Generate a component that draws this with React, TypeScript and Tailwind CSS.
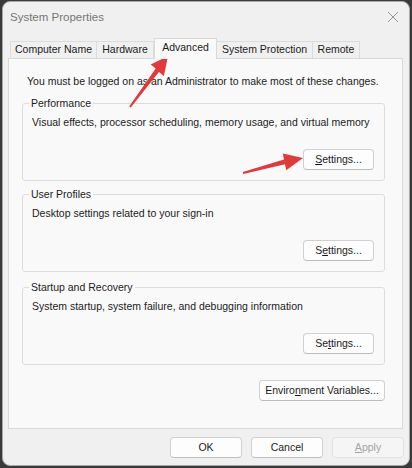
const font = "font-['Liberation_Sans',Arial,sans-serif]";

function Btn({ children, w, disabled }: { children: React.ReactNode; w: string; disabled?: boolean }) {
  return (
    <button
      className={`${w} h-[21px] rounded-[4px] border text-[10.5px] leading-none ${
        disabled
          ? "bg-[#f5f5f5] border-[#e3e3e3] text-[#a3a3a3]"
          : "bg-[#fdfdfd] border-[#d0d0d0] border-b-[#bdbdbd] text-[#1b1b1b]"
      }`}
    >
      {children}
    </button>
  );
}

function Group({ title, text, hot, top }: { title: string; text: string; hot: React.ReactNode; top: string }) {
  return (
    <fieldset className={`${top} ml-[13px] w-[363px] h-[86px] border border-[#dcdcdc] rounded-[3px]`}>
      <legend className="ml-[6px] px-[2px] leading-[16px]">{title}</legend>
      <p className="ml-[9px] mt-[3px] leading-[16px]">{text}</p>
      <div className="flex justify-end mr-[10px] mt-[19px]">
        <Btn w="w-[71px]">{hot}</Btn>
      </div>
    </fieldset>
  );
}

export default function App() {
  const tabs = [
    { name: "Computer Name", w: "w-[87px]" },
    { name: "Hardware", w: "w-[57px]" },
    { name: "Advanced", w: "w-[63px]", on: true },
    { name: "System Protection", w: "w-[96px]" },
    { name: "Remote", w: "w-[47px]" },
  ];
  return (
    <div className={`relative w-[412px] h-[468px] bg-[#3a3a3a] pt-[1px] pl-[2px] ${font} text-[10.5px] text-[#1b1b1b]`}>
      <div className="w-[408px] h-[465px] rounded-[8px] bg-[#f0f0f0] border border-[#a8a8a8] flex flex-col overflow-hidden">
        {/* title bar */}
        <div className="h-[36px] flex justify-between pl-[7px] pr-[8px] pt-[7px]">
          <span className="text-[11.5px] text-[#767676] leading-[16px]">System Properties</span>
          <svg width="12" height="12" viewBox="0 0 12 12" className="mt-[2px] mr-[2px]">
            <path d="M1 1L11 11M11 1L1 11" stroke="#959595" strokeWidth="1" />
          </svg>
        </div>

        {/* tabs */}
        <div className="h-[20px] flex items-end pl-[7px] relative z-10">
          {tabs.map((t) =>
            t.on ? (
              <div
                key={t.name}
                className={`${t.w} h-[21px] -mb-px bg-[#f9f9f9] border border-b-0 border-[#d9d9d9] flex items-center justify-center pb-[2px]`}
              >
                {t.name}
              </div>
            ) : (
              <div
                key={t.name}
                className={`${t.w} h-[17px] border border-b-0 border-l-0 first:border-l border-[#dcdcdc] flex items-center justify-center`}
              >
                {t.name}
              </div>
            )
          )}
        </div>

        {/* panel */}
        <div className="ml-[5px] mr-[6px] h-[371px] bg-[#f9f9f9] border border-[#d9d9d9] pt-[14px] flex flex-col">
          <p className="pl-[18px] leading-[16px]">
            You must be logged on as an Administrator to make most of these changes.
          </p>
          <Group
            top="mt-[6px]"
            title="Performance"
            text="Visual effects, processor scheduling, memory usage, and virtual memory"
            hot={<><u>S</u>ettings...</>}
          />
          <Group
            top="mt-[5px]"
            title="User Profiles"
            text="Desktop settings related to your sign-in"
            hot={<>S<u>e</u>ttings...</>}
          />
          <Group
            top="mt-[7px]"
            title="Startup and Recovery"
            text="System startup, system failure, and debugging information"
            hot={<>Se<u>t</u>tings...</>}
          />
          <div className="flex justify-end mr-[17px] mt-[15px]">
            <Btn w="w-[126px]">
              Enviro<u>n</u>ment Variables...
            </Btn>
          </div>
        </div>

        {/* bottom buttons */}
        <div className="flex justify-end gap-[9px] mr-[5px] mt-[8px]">
          <Btn w="w-[72px]">OK</Btn>
          <Btn w="w-[72px]">Cancel</Btn>
          <Btn w="w-[72px]" disabled>
            <u>A</u>pply
          </Btn>
        </div>
      </div>

      {/* annotation arrows */}
      <svg className="absolute inset-0 pointer-events-none" width="412" height="468">
        <polygon
          fill="#e03a3a"
          points="130.8,107.6 158.9,71.9 163.9,75.9 168,56 150.7,64.5 155.7,68.5 129.2,106.4"
        />
        <polygon
          fill="#e03a3a"
          points="243.2,174 285,164.3 286.2,170.2 303,158 282.8,153.6 284,159.5 242.8,172"
        />
      </svg>
    </div>
  );
}
